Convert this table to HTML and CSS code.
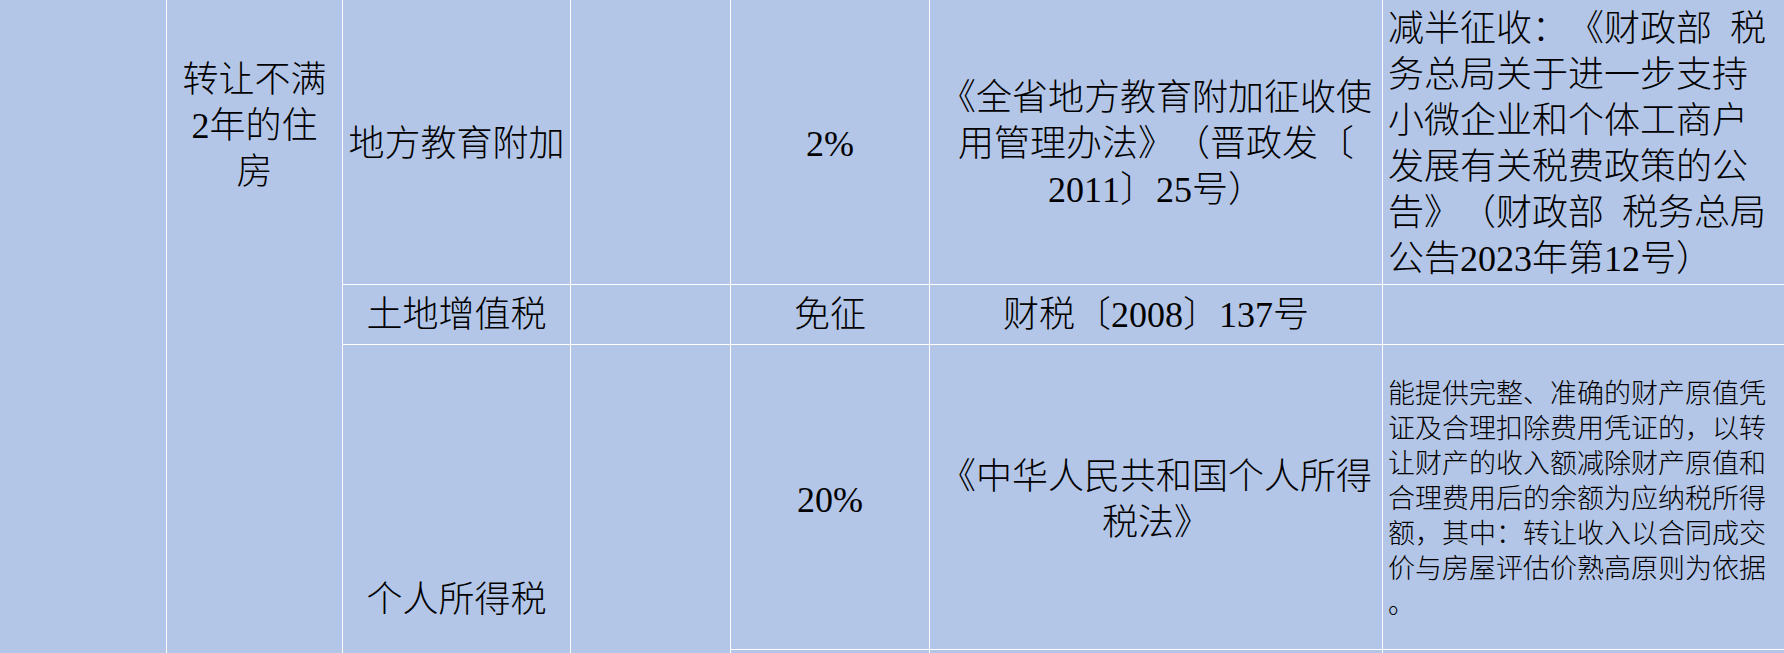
FILE: index.html
```html
<!DOCTYPE html>
<html lang="zh-CN">
<head>
<meta charset="utf-8">
<title>税费表</title>
<link rel="stylesheet" href="styles.css">
</head>
<body>
<div class="sheet">
  <div class="cell col-a span-all"></div>
  <div class="cell col-b span-all item">
    <span class="ln">转让不满</span>
    <span class="ln">2年的住</span>
    <span class="ln">房</span>
  </div>

  <div class="cell col-c row-1 top">地方教育附加</div>
  <div class="cell col-d row-1"></div>
  <div class="cell col-e row-1 top">2%</div>
  <div class="cell col-f row-1 top">
    <span class="ln">《全省地方教育附加征收使</span>
    <span class="ln">用管理办法》（晋政发〔</span>
    <span class="ln">2011〕25号）</span>
  </div>
  <div class="cell col-g row-1 top notes">
    <span class="ln">减半征收：《财政部 税</span>
    <span class="ln">务总局关于进一步支持</span>
    <span class="ln">小微企业和个体工商户</span>
    <span class="ln">发展有关税费政策的公</span>
    <span class="ln">告》（财政部 税务总局</span>
    <span class="ln">公告2023年第12号）</span>
  </div>

  <div class="cell col-c row-2">土地增值税</div>
  <div class="cell col-d row-2"></div>
  <div class="cell col-e row-2">免征</div>
  <div class="cell col-f row-2">财税〔2008〕137号</div>
  <div class="cell col-g row-2"></div>

  <div class="cell col-c row-34">个人所得税</div>
  <div class="cell col-d row-34"></div>
  <div class="cell col-e row-3 mid">20%</div>
  <div class="cell col-f row-3 mid">
    <span class="ln">《中华人民共和国个人所得</span>
    <span class="ln">税法》</span>
  </div>
  <div class="cell col-g row-3 mid notes small">
    <span class="ln">能提供完整、准确的财产原值凭</span>
    <span class="ln">证及合理扣除费用凭证的，以转</span>
    <span class="ln">让财产的收入额减除财产原值和</span>
    <span class="ln">合理费用后的余额为应纳税所得</span>
    <span class="ln">额，其中：转让收入以合同成交</span>
    <span class="ln">价与房屋评估价熟高原则为依据</span>
    <span class="ln">。</span>
  </div>

  <div class="cell col-e row-4"></div>
  <div class="cell col-f row-4"></div>
  <div class="cell col-g row-4"></div>
</div>
</body>
</html>
```

FILE: styles.css
```css
html, body {
  margin: 0;
  padding: 0;
  overflow: hidden;
  background: #ffffff;
}

body {
  font-family: "Liberation Serif", "Noto Sans CJK SC", serif;
  color: #000000;
  text-spacing-trim: space-all;
  font-kerning: none;
}

.sheet {
  display: grid;
  grid-template-columns: 166px 175px 227px 159px 198px 452px 420px;
  grid-template-rows: 284px 59px 304px 204px;
  gap: 1px;
  background: #ffffff;
  width: max-content;
}

.cell {
  background: #b4c6e7;
  font-size: 36px;
  line-height: 46px;
  font-weight: 300;
  display: flex;
  flex-direction: column;
  justify-content: center;
  align-items: center;
  text-align: center;
  white-space: nowrap;
  overflow: visible;
  text-spacing-trim: space-all;
}

.ln {
  display: block;
  white-space: nowrap;
}

.col-a { grid-column: 1; }
.col-b { grid-column: 2; }
.col-c { grid-column: 3; }
.col-d { grid-column: 4; }
.col-e { grid-column: 5; }
.col-f { grid-column: 6; }
.col-g { grid-column: 7; }

.span-all { grid-row: 1 / 5; }
.row-1 { grid-row: 1; }
.row-2 { grid-row: 2; }
.row-3 { grid-row: 3; }
.row-34 { grid-row: 3 / 5; }
.row-4 { grid-row: 4; }

.item {
  justify-content: flex-start;
  padding-top: 57px;
}

.top {
  padding-top: 4px;
}

.mid {
  padding-top: 5px;
}

.notes {
  align-items: flex-start;
  text-align: left;
  padding-left: 5px;
  word-spacing: 0.25em;
}

.small {
  font-size: 27px;
  line-height: 35px;
}
```
